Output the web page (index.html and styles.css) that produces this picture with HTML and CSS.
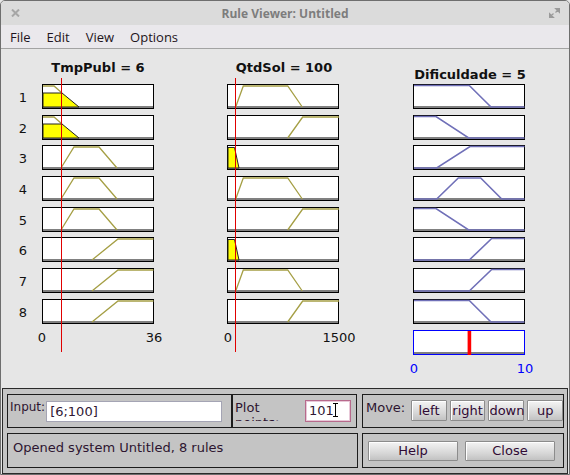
FILE: index.html
```html
<!DOCTYPE html>
<html>
<head>
<meta charset="utf-8">
<link rel="stylesheet" href="styles.css">
</head>
<body>
<div class="window">
  <div class="titlebar">
    <div class="tb-left">
      <svg width="9" height="8" viewBox="0 0 9 8"><path d="M1 0.5 L8 7.5 M8 0.5 L1 7.5" stroke="#a6a6a6" stroke-width="2"/></svg>
    </div>
    <div class="title">Rule Viewer: Untitled</div>
    <div class="tb-right">
      <svg width="11" height="10" viewBox="0 0 11 10"><path d="M6 0 H11 V5 Z M6.5 4.5 L9 2" fill="#9a9a9a" stroke="#9a9a9a" stroke-width="1.2"/><path d="M0 5 V10 H5 Z M4.5 5.5 L2 8" fill="#9a9a9a" stroke="#9a9a9a" stroke-width="1.2"/></svg>
    </div>
  </div>
  <div class="menubar">
    <span class="menu-item">File</span>
    <span class="menu-item">Edit</span>
    <span class="menu-item">View</span>
    <span class="menu-item">Options</span>
  </div>
  <div class="plots">
    <svg class="chart" width="568" height="339" viewBox="1 49 568 339">
      <defs>
        <g id="box">
          <rect x="0.5" y="0.5" width="111" height="24" fill="#fff" stroke="#000"/>
          <rect x="1" y="22" width="110" height="2" fill="#808080"/>
        </g>
        <g id="c1y">
          <polyline points="43,2 54,2 62,9" fill="none" stroke="#a59f45" stroke-width="1.3"/>
          <polygon points="43,23 43,9 62,9 79,23" fill="#ffff00" stroke="#222" stroke-width="1"/>
        </g>
        <polyline id="c1t" points="61,23 74,2 99,2 117,23" fill="none" stroke="#a59f45" stroke-width="1.3"/>
        <polyline id="c1r" points="92,23 118,2 153.5,2" fill="none" stroke="#a59f45" stroke-width="1.3"/>
        <polyline id="c2a" points="235.7,23 243.3,2 287.7,2 302.3,23" fill="none" stroke="#a59f45" stroke-width="1.3"/>
        <polyline id="c2b" points="287.7,23 302.7,2 339,2" fill="none" stroke="#a59f45" stroke-width="1.3"/>
        <polygon id="c2c" points="228,23 228,2.5 234.5,2.5 239,23" fill="#ffff00" stroke="#222" stroke-width="1"/>
        <polyline id="d1" points="414,1.5 469.3,1.5 491,23 524.5,23" fill="none" stroke="#7070b8" stroke-width="1.6"/>
        <polyline id="d2" points="414,1.5 436,1.5 468.7,23 524.5,23" fill="none" stroke="#7070b8" stroke-width="1.6"/>
        <polyline id="d3" points="414,23 436.7,23 470,1.5 524.5,1.5" fill="none" stroke="#7070b8" stroke-width="1.6"/>
        <polyline id="d4" points="414,23 436.7,23 458.3,2 480.7,2 501.7,23 524.5,23" fill="none" stroke="#7070b8" stroke-width="1.6"/>
        <polyline id="d6" points="414,23 469.3,23 491.7,1.5 524.5,1.5" fill="none" stroke="#7070b8" stroke-width="1.6"/>
      </defs>

      <text class="hdr" x="98" y="72">TmpPubl = 6</text>
      <text class="hdr" x="284" y="72">QtdSol = 100</text>
      <text class="hdr" x="470" y="79">Dificuldade = 5</text>

      <g class="rownum">
        <text x="23" y="102">1</text>
        <text x="23" y="133">2</text>
        <text x="23" y="163">3</text>
        <text x="23" y="194">4</text>
        <text x="23" y="225">5</text>
        <text x="23" y="255">6</text>
        <text x="23" y="286">7</text>
        <text x="23" y="317">8</text>
      </g>

      <!-- column 1 -->
      <use href="#box" x="42" y="84"/><use href="#c1y" y="84"/>
      <use href="#box" x="42" y="115"/><use href="#c1y" y="115"/>
      <use href="#box" x="42" y="145"/><use href="#c1t" y="145"/>
      <use href="#box" x="42" y="176"/><use href="#c1t" y="176"/>
      <use href="#box" x="42" y="207"/><use href="#c1t" y="207"/>
      <use href="#box" x="42" y="237"/><use href="#c1r" y="237"/>
      <use href="#box" x="42" y="268"/><use href="#c1r" y="268"/>
      <use href="#box" x="42" y="299"/><use href="#c1r" y="299"/>

      <!-- column 2 -->
      <use href="#box" x="227" y="84"/><use href="#c2a" y="84"/>
      <use href="#box" x="227" y="115"/><use href="#c2b" y="115"/>
      <use href="#box" x="227" y="145"/><use href="#c2c" y="145"/>
      <use href="#box" x="227" y="176"/><use href="#c2a" y="176"/>
      <use href="#box" x="227" y="207"/><use href="#c2b" y="207"/>
      <use href="#box" x="227" y="237"/><use href="#c2c" y="237"/>
      <use href="#box" x="227" y="268"/><use href="#c2a" y="268"/>
      <use href="#box" x="227" y="299"/><use href="#c2b" y="299"/>

      <!-- column 3 -->
      <use href="#box" x="413" y="84"/><use href="#d1" y="84"/>
      <use href="#box" x="413" y="115"/><use href="#d2" y="115"/>
      <use href="#box" x="413" y="145"/><use href="#d3" y="145"/>
      <use href="#box" x="413" y="176"/><use href="#d4" y="176"/>
      <use href="#box" x="413" y="207"/><use href="#d2" y="207"/>
      <use href="#box" x="413" y="237"/><use href="#d6" y="237"/>
      <use href="#box" x="413" y="268"/><use href="#d6" y="268"/>
      <use href="#box" x="413" y="299"/><use href="#d1" y="299"/>

      <!-- output aggregate -->
      <rect x="413.5" y="330.5" width="111" height="24" fill="#fff" stroke="#0000ff"/>
      <rect x="414" y="352" width="110" height="2" fill="#808080"/>
      <rect x="467.6" y="331" width="3.6" height="24" fill="#ff0000"/>

      <!-- input cursors -->
      <line x1="61.5" y1="78" x2="61.5" y2="352" stroke="#e00000" stroke-width="1"/>
      <line x1="235.5" y1="78" x2="235.5" y2="352" stroke="#e00000" stroke-width="1"/>

      <g class="axis">
        <text x="42" y="342">0</text>
        <text x="154" y="342">36</text>
        <text x="228" y="342">0</text>
        <text x="339" y="342">1500</text>
      </g>
      <g class="axis blue">
        <text x="414" y="373">0</text>
        <text x="525" y="373">10</text>
      </g>
    </svg>
  </div>
  <div class="panel">
    <div class="left-top">
      <div class="frame input-frame">
        <span class="lbl">Input:</span>
        <div class="field input-field">[6;100]</div>
      </div>
      <div class="frame plot-frame">
        <span class="lbl plot-lbl">Plot points:</span>
        <div class="field pts-field">101<span class="ibeam"></span></div>
      </div>
    </div>
    <div class="frame move-frame">
      <span class="lbl move-lbl">Move:</span>
      <button class="btn">left</button>
      <button class="btn">right</button>
      <button class="btn">down</button>
      <button class="btn">up</button>
    </div>
    <div class="frame status-frame">
      <span class="status">Opened system Untitled, 8 rules</span>
    </div>
    <div class="frame help-frame">
      <button class="btn big">Help</button>
      <button class="btn big">Close</button>
    </div>
  </div>
</div>
</body>
</html>
```

FILE: styles.css
```css
* { box-sizing: border-box; }

body {
  margin: 0;
  font-family: "DejaVu Sans", sans-serif;
  background: #e6e6e6;
}

.window {
  width: 570px;
  height: 475px;
  border: 1px solid #6e6e6e;
  border-radius: 5px 5px 0 0;
  background: #e6e6e6;
  display: flex;
  flex-direction: column;
  overflow: hidden;
}

.titlebar {
  height: 24px;
  flex: none;
  background: #dbdbdb;
  display: flex;
  align-items: center;
}

.tb-left {
  width: 40px;
  padding-left: 10px;
  display: flex;
  align-items: center;
}

.tb-right {
  width: 40px;
  padding-right: 9px;
  display: flex;
  justify-content: flex-end;
  align-items: center;
}

.title {
  flex: 1;
  text-align: center;
  font-family: "Open Sans", sans-serif;
  font-weight: 700;
  font-size: 12px;
  color: #7d7d7d;
}

.menubar {
  height: 24px;
  flex: none;
  background: #eae8ec;
  border-bottom: 1px solid #a3a3a3;
  display: flex;
  align-items: center;
  padding-left: 1px;
  padding-top: 1px;
}

.menu-item {
  font-family: "Open Sans", sans-serif;
  font-size: 13px;
  color: #1e1420;
  padding: 0 8px;
}

.plots {
  height: 339px;
  flex: none;
}

.chart { display: block; }

.hdr {
  font-family: "DejaVu Sans", sans-serif;
  font-weight: 700;
  font-size: 13px;
  fill: #111;
  text-anchor: middle;
}

.rownum text, .axis text {
  font-family: "DejaVu Sans", sans-serif;
  font-size: 13px;
  fill: #111;
  text-anchor: middle;
}

.axis.blue text { fill: #0000ff; }

.panel {
  flex: 1;
  margin: 0 1px;
  border: 1px solid #2a2a2a;
  background: #c4c4c4;
  padding: 5px 0 0 4px;
  display: grid;
  grid-template-columns: 351px 202px;
  grid-template-rows: 34px 35px;
  column-gap: 4px;
  row-gap: 5px;
  font-family: "DejaVu Sans", sans-serif;
  font-size: 12px;
  color: #2d1530;
}

.left-top {
  display: flex;
  gap: 0;
}

.frame {
  border: 1px solid #1c1c1c;
  display: flex;
  align-items: center;
}

.input-frame {
  width: 225px;
  padding-left: 2px;
  align-items: flex-start;
  padding-top: 5px;
}

.lbl { line-height: 15px; }

.input-field {
  margin-left: 1px;
  margin-top: 1px;
  width: 176px;
  height: 21px;
}

.field {
  background: #fff;
  border: 1px solid #a4a4b4;
  font-size: 13px;
  line-height: 19px;
  padding-left: 3px;
  color: #301834;
}

.plot-frame {
  width: 125px;
  align-items: flex-start;
  padding-top: 5px;
  padding-left: 2px;
}

.plot-lbl {
  width: 70px;
  height: 21px;
  overflow: hidden;
  font-size: 13px;
}

.pts-field {
  width: 46px;
  height: 22px;
  border: 1px solid #b76a8c;
  box-shadow: inset 0 0 0 1px #e8c8d8;
  position: relative;
}

.ibeam {
  display: inline-block;
  width: 1px;
  height: 14px;
  background: #000;
  vertical-align: -2px;
  margin-left: 1px;
  position: relative;
}

.ibeam::before, .ibeam::after {
  content: "";
  position: absolute;
  left: -2px;
  width: 5px;
  height: 1px;
  background: #000;
}
.ibeam::before { top: 0; }
.ibeam::after { bottom: 0; }

.move-frame {
  padding-left: 3px;
  align-items: flex-start;
  padding-top: 5px;
  gap: 3px;
}

.move-lbl {
  margin-right: 3px;
  font-size: 13px;
}

.btn {
  font-family: "DejaVu Sans", sans-serif;
  font-size: 13px;
  color: #300a34;
  height: 21px;
  padding: 0;
  margin: 0;
  border: 1px solid #8c8c8c;
  border-radius: 1px;
  background: linear-gradient(#f4f4f4, #d8d8d8 60%, #c2c2c2);
  box-shadow: inset 1px 1px 0 #ffffff;
  width: 36px;
}

.status-frame {
  padding-left: 5px;
  align-items: flex-start;
  padding-top: 6px;
}

.status { font-size: 13px; }

.help-frame {
  padding-left: 5px;
  gap: 7px;
}

.btn.big {
  width: 90px;
  height: 20px;
}
```
